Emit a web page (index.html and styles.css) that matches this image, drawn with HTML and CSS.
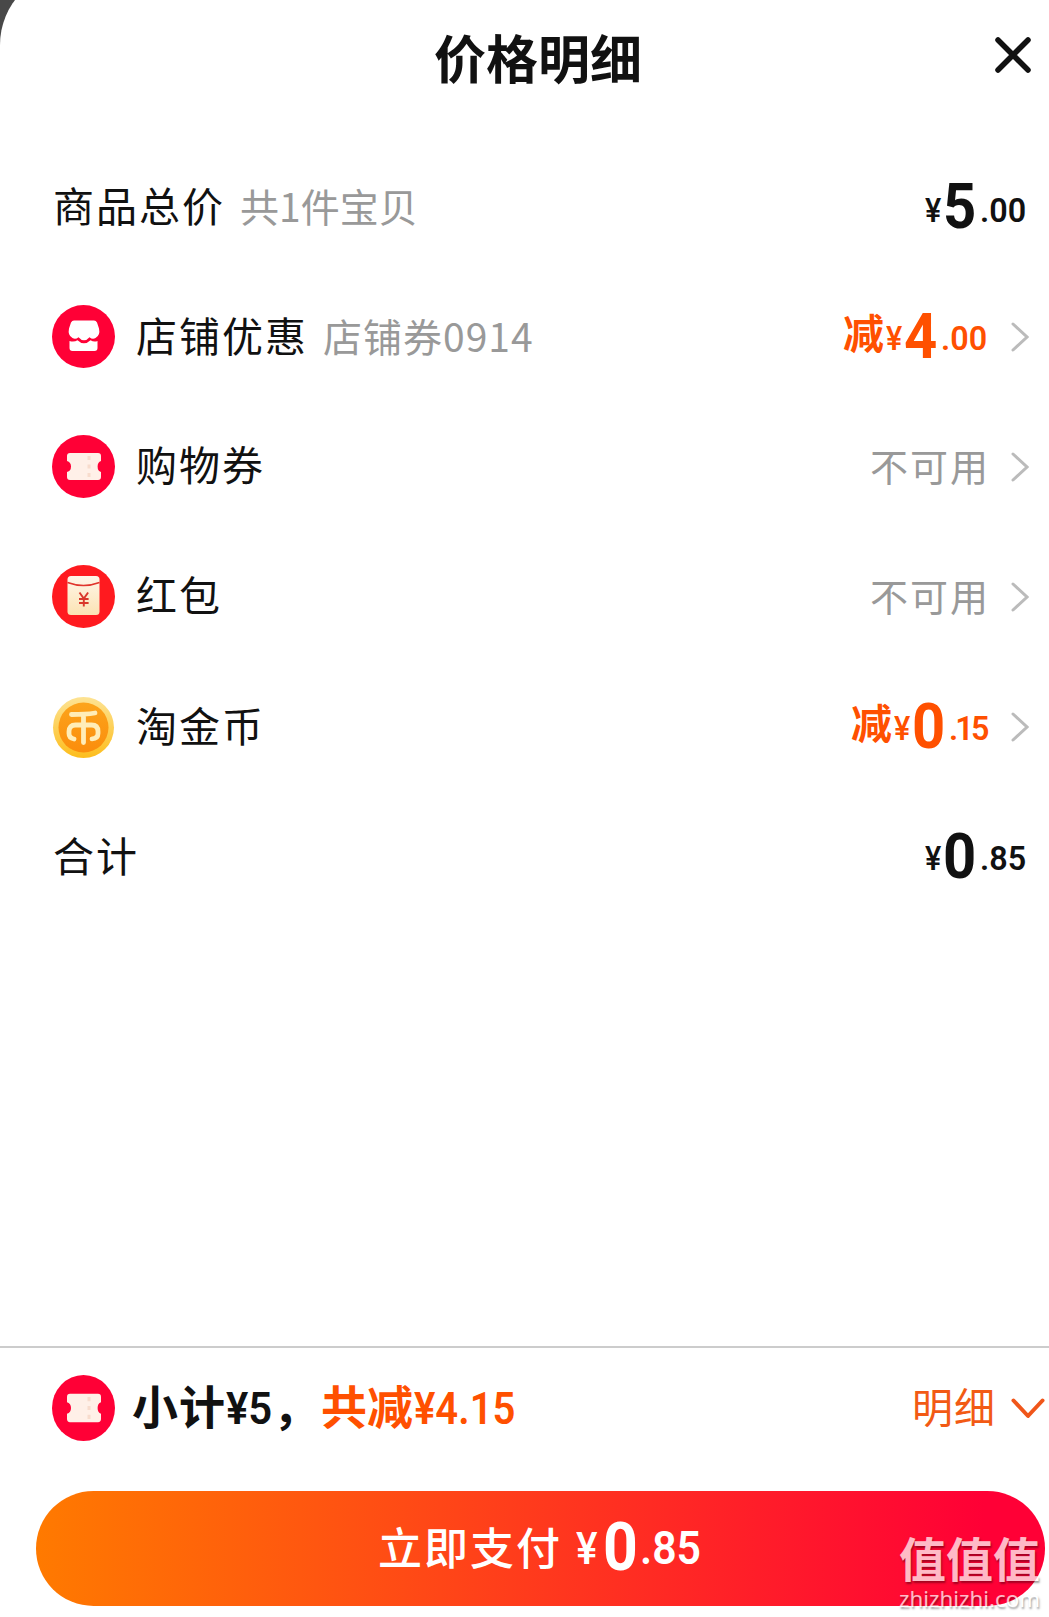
FILE: index.html
```html
<!DOCTYPE html>
<html lang="zh-CN">
<head>
<meta charset="utf-8">
<title>价格明细</title>
<link rel="stylesheet" href="styles.css">
</head>
<body>
<svg class="defs" width="0" height="0" aria-hidden="true">
  <defs>
    <linearGradient id="paper" x1="0" y1="0" x2="0" y2="1"><stop offset="0" stop-color="#fff6e9"/><stop offset="1" stop-color="#fbe3b4"/></linearGradient>
    <linearGradient id="rim" x1="0" y1="0" x2="0" y2="1"><stop offset="0" stop-color="#fde394"/><stop offset="1" stop-color="#fdbd1c"/></linearGradient>
    <linearGradient id="face" x1="0" y1="0" x2="0" y2="1"><stop offset="0" stop-color="#fca41c"/><stop offset="1" stop-color="#fb8d0c"/></linearGradient>
    <symbol id="ticket" viewBox="0 0 63 63">
      <path fill="#fff0e8" d="M18 18h28q3 0 3 3v5q-3.400 1-3.400 5.500T49 37v5q0 3-3 3H18q-3 0-3-3v-5q4-1 4-5.500T15 26v-5q0-3 3-3z"/>
      <path stroke="#f8dccd" stroke-width="3" stroke-dasharray="4 4.500" d="M37 21v22"/>
    </symbol>
  </defs>
</svg>
<main class="sheet">
  <header class="head">
    <h1 class="title">价格明细</h1>
    <svg class="close" viewBox="0 0 36 36"><path d="M3 3l30 30M33 3L3 33"/></svg>
  </header>

  <section class="list">
    <div class="row">
      <span class="label">商品总价</span><span class="note">共1件宝贝</span>
      <span class="price"><span class="yen">¥</span><span class="big">5</span><span class="cents">.00</span></span>
    </div>
    <div class="row">
      <svg class="icon" viewBox="0 0 63 63"><circle cx="31.500" cy="31.500" r="31.500" fill="#ff0036"/>
        <path fill="#fff" d="M22 15.500h20q2 0 3 2l2 6q1.500 7-3.500 9.500-3 1.800-6-.8-2.500 3-5.500 3t-5.500-3q-3 2.600-6 .8-5-2.500-3.500-9.500l2-6q1-2 3-2z"/>
        <path fill="#fff" d="M17.500 36q4.500 1.500 8-.7 3 3 6.500 3t6.500-3q3.500 2.200 7 .7v7q0 3-3 3h-22q-3 0-3-3z"/></svg>
      <span class="label">店铺优惠</span><span class="note wide">店铺券0914</span>
      <span class="price off linked"><b class="minus">减</b><span class="yen">¥</span><span class="big">4</span><span class="cents">.00</span></span>
      <svg class="arrow" viewBox="0 0 18 30"><path d="M2 2l14 13L2 28"/></svg>
    </div>
    <div class="row">
      <svg class="icon" viewBox="0 0 63 63"><circle cx="31.500" cy="31.500" r="31.500" fill="#ff0036"/><use href="#ticket"/></svg>
      <span class="label raised">购物券</span>
      <span class="none">不可用</span>
      <svg class="arrow" viewBox="0 0 18 30"><path d="M2 2l14 13L2 28"/></svg>
    </div>
    <div class="row">
      <svg class="icon" viewBox="0 0 63 63"><circle cx="31.500" cy="31.500" r="31.500" fill="#ff1a1f"/>
        <rect x="15.500" y="11" width="32" height="39" rx="3.500" fill="url(#paper)"/>
        <path fill="none" stroke="#e0352c" stroke-width="1.600" d="M15.500 17.500q16 6 32 0"/>
        <path fill="none" stroke="#d9382c" stroke-width="1.900" d="M27.500 27.500l4.300 6 4.300-6M31.800 33.500v8M27 34h9.600M27 38h9.600"/></svg>
      <span class="label raised">红包</span>
      <span class="none">不可用</span>
      <svg class="arrow" viewBox="0 0 18 30"><path d="M2 2l14 13L2 28"/></svg>
    </div>
    <div class="row">
      <svg class="icon coin" viewBox="0 0 63 63"><circle cx="31.500" cy="31.500" r="30.500" fill="url(#rim)"/><circle cx="31.500" cy="31.500" r="25" fill="url(#face)"/>
        <path fill="none" stroke="#ffedb8" stroke-width="4.800" stroke-linecap="round" stroke-linejoin="round" d="M19.500 18.500q14 0 23.500-1.500M31.500 18.500v28M22 43q-5-1-5-5.500v-2q0-6.500 6.500-6.500h16q6.500 0 6.500 6.500v2q0 5-6 5.300"/></svg>
      <span class="label">淘金币</span>
      <span class="price off linked"><b class="minus">减</b><span class="yen">¥</span><span class="big">0</span><span class="cents narrow">.15</span></span>
      <svg class="arrow" viewBox="0 0 18 30"><path d="M2 2l14 13L2 28"/></svg>
    </div>
    <div class="row">
      <span class="label">合计</span>
      <span class="price"><span class="yen">¥</span><span class="big">0</span><span class="cents">.85</span></span>
    </div>
  </section>

  <footer class="foot">
    <div class="summary">
      <svg class="icon" viewBox="0 0 63 63" preserveAspectRatio="none"><circle cx="31.500" cy="31.500" r="31.500" fill="#ff0036"/><use href="#ticket"/></svg>
      <span class="sub">小计<span class="num five">¥5</span>，</span>
      <span class="saved">共减<span class="num">¥4.15</span></span>
      <span class="detail">明细</span>
      <svg class="down" viewBox="0 0 34 22"><path d="M2.500 2.500L17 18 31.500 2.500"/></svg>
    </div>
    <div class="pay">
      <span class="pay-text">立即支付</span>
      <span class="pay-price"><span class="yen">¥</span><span class="big">0</span><span class="cents">.85</span></span>
    </div>
  </footer>
</main>
<div class="mark"><span class="mark-name">值值值</span><span class="mark-url">zhizhizhi.com</span></div>
</body>
</html>
```
FILE: styles.css
```css
* { box-sizing: border-box; }

body {
  margin: 0;
  width: 1049px;
  height: 1617px;
  overflow: hidden;
  background: #484848;
  color: #111;
  font-family: "Noto Sans CJK SC", sans-serif;
  position: relative;
}

.defs { display: block; }

.sheet {
  display: flex;
  flex-direction: column;
  height: 1647px;
  margin-top: -30px;
  padding-top: 30px;
  background: #fff;
  border-top-left-radius: 75px;
}

.head {
  display: flex;
  height: 142px;
  padding-left: 434px;
  padding-right: 18px;
  justify-content: space-between;
}

.title {
  margin: 19px 0 0;
  font-size: 52px;
  line-height: 76px;
  font-weight: 700;
  white-space: nowrap;
}

.close { width: 36px; height: 36px; margin-top: 37px; }
.close path { stroke: #111; stroke-width: 5.5; stroke-linecap: round; }

.list { flex: 1; }

.row {
  display: flex;
  align-items: center;
  height: 130px;
  padding: 0 20px 0 52px;
  white-space: nowrap;
}

.icon { flex: none; width: 63px; height: 63px; margin: 0 20px 2px 0; }
.coin { margin-bottom: 0; }

.label { font-size: 41px; letter-spacing: 2px; line-height: 60px; margin: 0 0 6px 1px; }
.raised { margin-bottom: 9px; }
.note { font-size: 39px; line-height: 60px; color: #999; margin: 0 0 4px 15px; }
.wide { letter-spacing: 1px; }

.none { margin: 0 21px 6px auto; font-size: 38px; letter-spacing: 2px; color: #999; }

.arrow { flex: none; width: 18px; height: 30px; }
.arrow path { fill: none; stroke: #bbb; stroke-width: 3; stroke-linecap: round; }

.price {
  margin: 6px 0 0 auto;
  font-size: 34px;
  line-height: 74px;
}
.linked { margin-right: 21px; }
.off { color: #ff5000; }

.minus { display: inline-block; width: 43px; font-size: 41px; line-height: 60px; vertical-align: 9px; font-weight: 700; }

.yen, .big, .cents, .num {
  display: inline-block;
  font-family: Roboto, sans-serif;
  transform-origin: left center;
}
.yen { width: 18px; font-size: 34px; font-weight: 500; vertical-align: 6px; transform: scaleX(.9); }
.big { width: 37px; font-size: 63px; font-weight: 700; transform: scaleX(.92); }
.cents { width: 49px; font-size: 34px; font-weight: 600; vertical-align: 6px; transform: scaleX(.95); }
.row:nth-child(n+2) .yen,
.row:nth-child(n+2) .cents { vertical-align: 8px; }
.narrow { width: 41px; letter-spacing: -3px; }

.foot { height: 271px; border-top: 2px solid #ccc; }

.summary {
  display: flex;
  align-items: center;
  height: 124px;
  padding: 0 4px 0 52px;
  white-space: nowrap;
}
.summary .icon { height: 66px; margin: 0 17px 4px 0; }
.sub, .saved { font-size: 46px; font-weight: 700; line-height: 66px; margin-bottom: 7px; }
.sub { letter-spacing: 1px; }
.saved { color: #ff5000; margin-left: 1px; }
.saved .num { margin-left: 1px; }
.num { width: 98px; font-size: 45px; font-weight: 600; transform: scaleX(.89); }
.five { width: 47px; letter-spacing: 0; transform: scaleX(.93); }
.detail { margin: 0 15px 10px auto; font-size: 41px; letter-spacing: 1px; color: #f25a14; }
.down { flex: none; width: 34px; height: 22px; margin-bottom: 3px; }
.down path { fill: none; stroke: #f0561a; stroke-width: 4; stroke-linecap: round; stroke-linejoin: round; }

.pay {
  display: flex;
  align-items: center;
  width: 1009px;
  height: 115px;
  margin: 19px 0 0 36px;
  padding-left: 342px;
  border-radius: 58px;
  background: linear-gradient(90deg, #ff7a00, #ff0036 94%);
  color: #fff;
  white-space: nowrap;
}
.pay-text { font-size: 44px; font-weight: 500; letter-spacing: 2px; margin-bottom: 6px; }
.pay-price { margin: 14px 0 0 14px; line-height: 80px; }
.pay .yen { width: 27px; font-size: 45px; }
.pay .big { font-size: 66px; }
.pay .cents { width: 62px; font-size: 46px; transform: scaleX(.93); }

.mark {
  position: absolute;
  left: 899px;
  top: 1527px;
  width: 150px;
  display: flex;
  flex-direction: column;
  color: #fff;
  opacity: .72;
  text-shadow: 1px 2px 2px rgba(0, 0, 0, .5);
  white-space: nowrap;
}
.mark-name { font-size: 47px; line-height: 60px; font-weight: 700; }
.mark-url { font: 22.3px/24px "Noto Sans", sans-serif; }
```
